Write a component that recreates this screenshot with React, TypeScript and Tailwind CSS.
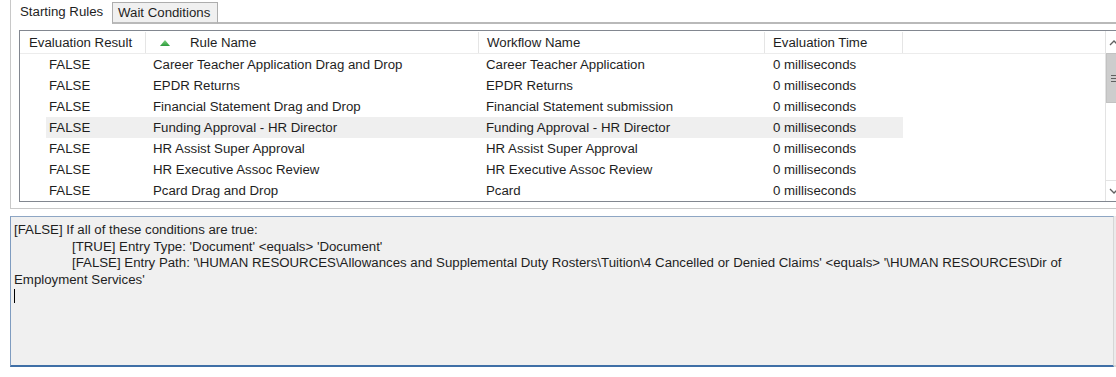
import React from 'react';

const rows = [
  { result: 'FALSE', rule: 'Career Teacher Application Drag and Drop', workflow: 'Career Teacher Application', time: '0 milliseconds' },
  { result: 'FALSE', rule: 'EPDR Returns', workflow: 'EPDR Returns', time: '0 milliseconds' },
  { result: 'FALSE', rule: 'Financial Statement Drag and Drop', workflow: 'Financial Statement submission', time: '0 milliseconds' },
  { result: 'FALSE', rule: 'Funding Approval - HR Director', workflow: 'Funding Approval - HR Director', time: '0 milliseconds', selected: true },
  { result: 'FALSE', rule: 'HR Assist Super Approval', workflow: 'HR Assist Super Approval', time: '0 milliseconds' },
  { result: 'FALSE', rule: 'HR Executive Assoc Review', workflow: 'HR Executive Assoc Review', time: '0 milliseconds' },
  { result: 'FALSE', rule: 'Pcard Drag and Drop', workflow: 'Pcard', time: '0 milliseconds' },
];

const detailLines = [
  { indent: false, text: '[FALSE] If all of these conditions are true:' },
  { indent: true, text: "[TRUE] Entry Type: 'Document' <equals> 'Document'" },
  {
    indent: true,
    text: "[FALSE] Entry Path: '\\HUMAN RESOURCES\\Allowances and Supplemental Duty Rosters\\Tuition\\4 Cancelled or Denied Claims' <equals> '\\HUMAN RESOURCES\\Dir of",
  },
  { indent: false, text: "Employment Services'" },
];

const SortArrow = () => (
  <svg width="10" height="6" viewBox="0 0 10 6">
    <defs>
      <linearGradient id="sortg" x1="0" y1="0" x2="0" y2="1">
        <stop offset="0" stopColor="#7fd37f" />
        <stop offset="1" stopColor="#2c9a3c" />
      </linearGradient>
    </defs>
    <polygon points="5,0 10,6 0,6" fill="url(#sortg)" />
  </svg>
);

const ScrollBar = () => (
  <div className="w-[17px] flex flex-col bg-white border-l border-[#e3e3e3]">
    <div className="h-[22px] flex items-center justify-center">
      <svg width="10" height="7" viewBox="0 0 10 7">
        <polyline points="1,6 5,2 9,6" fill="none" stroke="#606060" strokeWidth="1.3" />
      </svg>
    </div>
    <div className="h-[50px] bg-[#cdcdcd] border border-[#c2c2c2] flex flex-col items-center justify-center gap-[2px]">
      <div className="w-[7px] h-[1px] bg-[#606060]" />
      <div className="w-[7px] h-[1px] bg-[#606060]" />
      <div className="w-[7px] h-[1px] bg-[#606060]" />
    </div>
    <div className="flex-1" />
    <div className="h-[21px] flex items-center justify-center border-t border-[#e3e3e3]">
      <svg width="10" height="7" viewBox="0 0 10 7">
        <polyline points="1,1 5,5 9,1" fill="none" stroke="#606060" strokeWidth="1.3" />
      </svg>
    </div>
  </div>
);

const App: React.FC = () => {
  return (
    <div className="w-[1116px] h-[377px] overflow-hidden bg-white text-[13.25px] text-[#1e1e1e] font-['Liberation_Sans',Arial,sans-serif] leading-none">
      <div className="w-[1150px] pl-[10px]">
        {/* Tabs */}
        <div className="flex items-end h-[24px]">
          <div className="w-[102px] h-[24px] border-l border-[#c8c8c8] pl-[9px] flex items-center">
            Starting Rules
          </div>
          <div className="w-[106px] h-[22px] border border-b-2 border-[#adadad] border-b-[#b9b9b9] bg-[#f0f0f0] pl-[5px] flex items-center">
            Wait Conditions
          </div>
          <div className="flex-1 h-[2px] bg-[#b9b9b9]" />
        </div>

        {/* Tab panel */}
        <div className="border-l border-b border-[#c8c8c8] pl-[8px] pt-[6px] pb-[6px]">
          <div className="h-[172px] border border-[#828790] flex">
            <div className="w-[1085px] flex flex-col">
              {/* Header */}
              <div className="h-[23px] flex border-b border-[#ececec] pt-[1px]">
                <div className="w-[126px] border-r border-[#e5e5e5] pl-[9px] flex items-center">Evaluation Result</div>
                <div className="w-[333px] border-r border-[#e5e5e5] pl-[14px] flex items-center">
                  <SortArrow />
                  <span className="ml-[20px]">Rule Name</span>
                </div>
                <div className="w-[286px] border-r border-[#e5e5e5] pl-[8px] flex items-center">Workflow Name</div>
                <div className="w-[138px] border-r border-[#e5e5e5] pl-[8px] flex items-center">Evaluation Time</div>
              </div>
              {/* Rows */}
              {rows.map((row, index) => (
                <div key={index} className="h-[21px] flex pl-[26px]">
                  <div className={`flex ${row.selected ? 'bg-[#efefef]' : ''}`}>
                    <div className="w-[100px] pl-[3px] flex items-center">{row.result}</div>
                    <div className="w-[333px] pl-[7px] flex items-center">{row.rule}</div>
                    <div className="w-[286px] pl-[7px] flex items-center">{row.workflow}</div>
                    <div className="w-[138px] pl-[8px] flex items-center">{row.time}</div>
                  </div>
                </div>
              ))}
            </div>
            <ScrollBar />
          </div>
        </div>

        {/* Condition details */}
        <div className="mt-[7px] flex">
          <div className="w-[1104px] h-[151px] bg-[#f0f0f0] border-l border-t border-r border-b-2 border-l-[#7f9cc0] border-t-[#8ea6c4] border-r-[#d6d6d6] border-b-[#3f6fa6] pl-[3px] pt-[5px] leading-[16.6px]">
            {detailLines.map((line, index) => (
              <div key={index} className={`whitespace-nowrap ${line.indent ? 'pl-[58px]' : ''}`}>
                {line.text}
              </div>
            ))}
            <div className="w-[1px] h-[14px] bg-black mt-[1px]" />
          </div>
          <div className="w-[17px] h-[151px] bg-[#ebebeb] border-b-2 border-[#d6d6d6]" />
        </div>
      </div>
    </div>
  );
};

export default App;
